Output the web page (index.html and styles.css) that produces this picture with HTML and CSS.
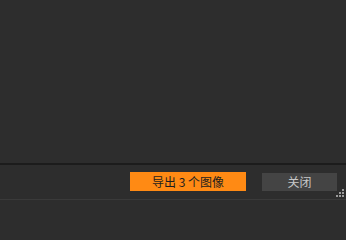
FILE: index.html
```html
<!DOCTYPE html>
<html lang="zh-CN">
<head>
<meta charset="utf-8">
<link rel="stylesheet" href="styles.css">
</head>
<body>
<div class="window">
  <div class="content"></div>
  <div class="separator"></div>
  <div class="footer">
    <button class="btn btn-primary">导出 3 个图像</button>
    <button class="btn btn-secondary">关闭</button>
  </div>
  <div class="grip">
    <span class="dot d1"></span>
    <span class="dot d2"></span><span class="dot d3"></span>
    <span class="dot d4"></span><span class="dot d5"></span><span class="dot d6"></span>
  </div>
</div>
</body>
</html>
```
FILE: styles.css
```css
html, body {
  margin: 0;
  padding: 0;
  background: #2d2d2d;
}
.window {
  position: relative;
  width: 346px;
  height: 200px;
  display: flex;
  flex-direction: column;
  background: #2d2d2d;
  border-bottom: 1px solid #3a3a3a;
  box-sizing: border-box;
  font-family: "Noto Sans CJK SC", "Noto Sans", sans-serif;
}
.content {
  flex: 1;
}
.separator {
  height: 2px;
  background: #1c1c1c;
}
.footer {
  height: 34px;
  display: flex;
  align-items: center;
  justify-content: flex-end;
  gap: 16px;
  padding-right: 9px;
}
.btn {
  border: none;
  margin: 0;
  padding: 0;
  font-family: "Noto Sans CJK SC", "Noto Sans", sans-serif;
  font-size: 12px;
  line-height: 18px;
}
.btn-primary {
  width: 116px;
  height: 19px;
  background: #ff8a14;
  color: #1e1e1e;
  margin-top: -1px;
}
.btn-secondary {
  width: 75px;
  height: 18px;
  background: #444444;
  color: #c8c8c8;
}
.grip {
  position: absolute;
  right: 2px;
  bottom: 2px;
  width: 8px;
  height: 8px;
}
.dot {
  position: absolute;
  width: 2px;
  height: 2px;
  background: #9a9a9a;
}
.d1 { left: 6px; top: 0; }
.d2 { left: 3px; top: 3px; }
.d3 { left: 6px; top: 3px; }
.d4 { left: 0; top: 6px; }
.d5 { left: 3px; top: 6px; }
.d6 { left: 6px; top: 6px; }
```
